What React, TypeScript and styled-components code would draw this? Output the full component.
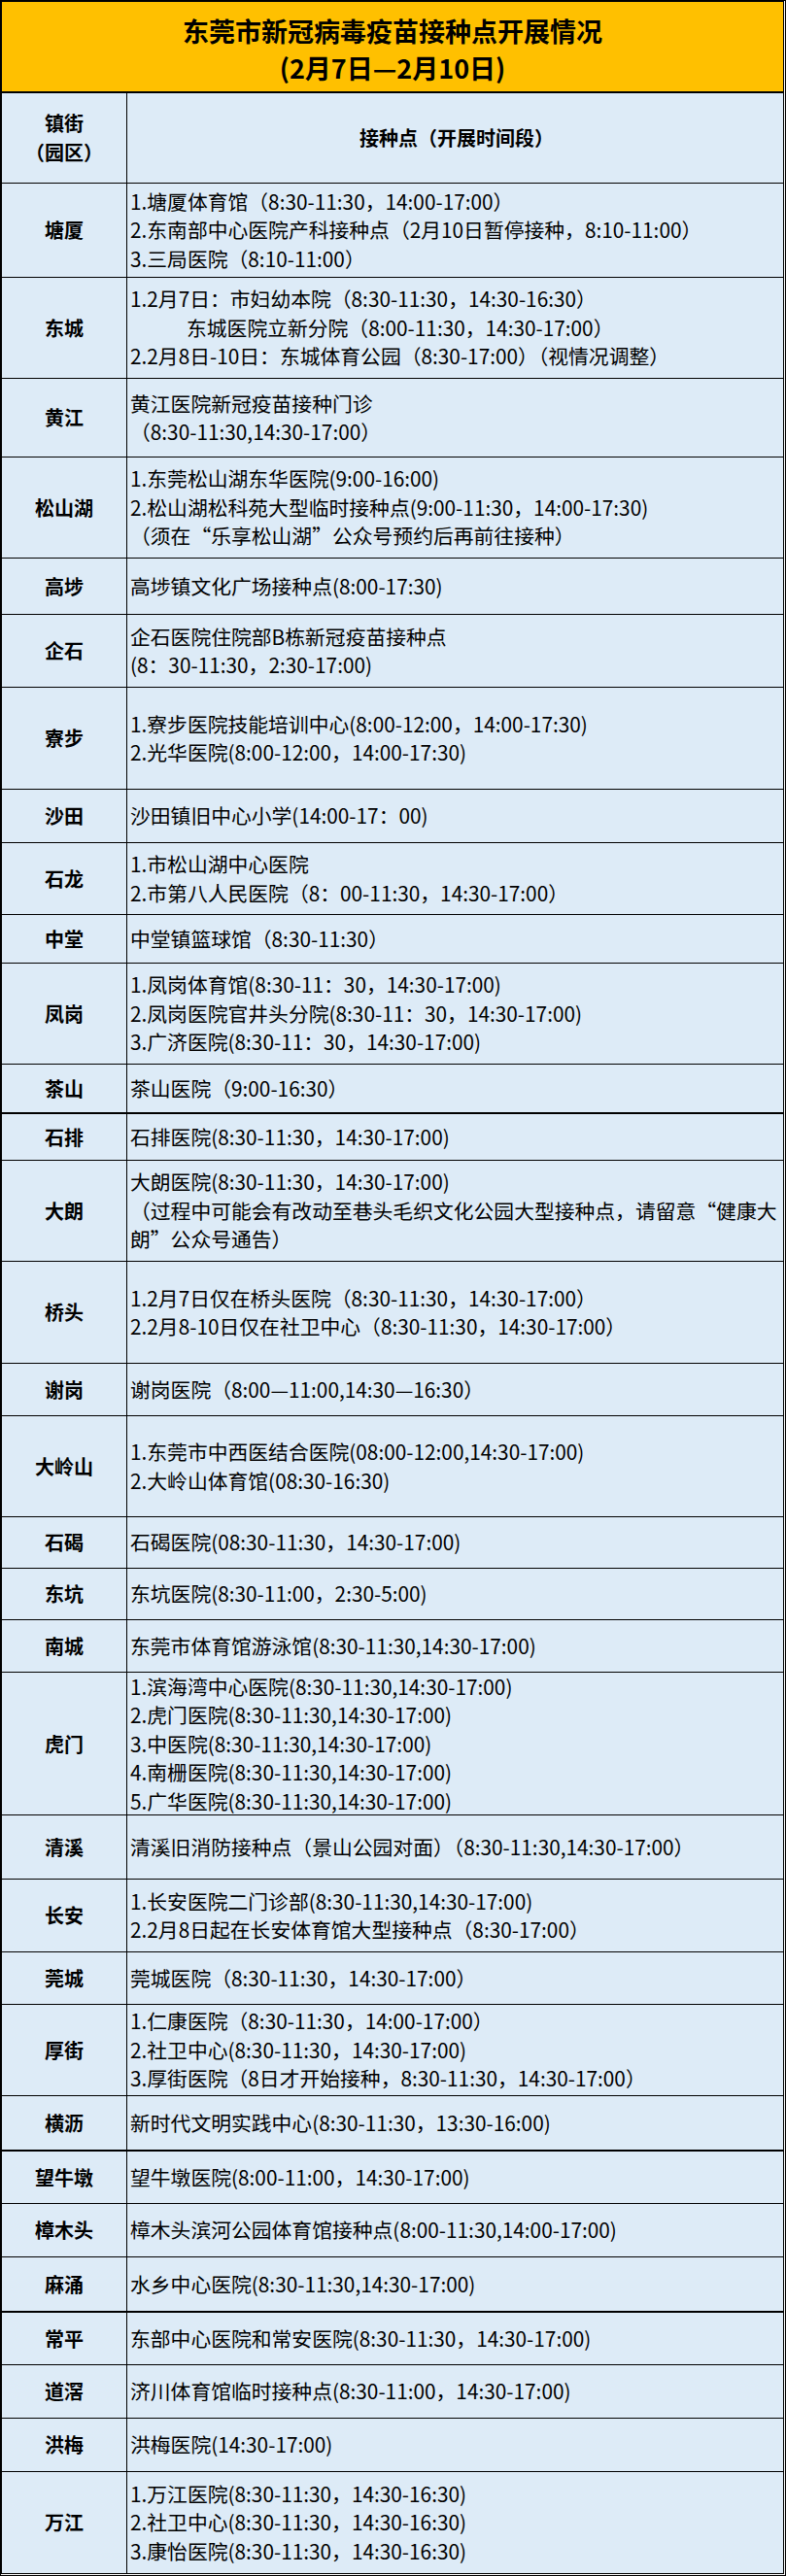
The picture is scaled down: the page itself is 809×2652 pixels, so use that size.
import { ReactElement } from "react"
import styled, { createGlobalStyle } from "styled-components"

const GlobalStyle = createGlobalStyle`
  html,
  body {
    margin: 0;
    padding: 0;
    background: #fff;
  }
  body {
    font-family: "Noto Sans CJK SC", "Noto Sans", sans-serif;
    color: #000;
  }
`

const Page = styled.div`
  width: 809px;
  box-sizing: border-box;
  border: 1px solid #000;
  padding: 0 1px 1px 0;
  background: #fff;
`

const Table = styled.div`
  border: 1px solid #000;
  background: #ddebf7;
`

const TitleBar = styled.div`
  height: 94px;
  box-sizing: border-box;
  padding-top: 6px;
  background: #ffc000;
  border-bottom: 2px solid #000;
  display: flex;
  flex-direction: column;
  align-items: center;
  justify-content: center;
  font-size: 27px;
  font-weight: 700;
  line-height: 38px;
`

const Row = styled.div<{ $h: number; $thick?: boolean; $head?: boolean }>`
  display: grid;
  grid-template-columns: 129px 1fr;
  height: ${(p) => p.$h}px;
  box-sizing: border-box;
  border-top: ${(p) => (p.$head ? "none" : `${p.$thick ? 2 : 1}px solid #000`)};
`

const Label = styled.div`
  border-right: 1px solid #000;
  display: flex;
  flex-direction: column;
  align-items: center;
  justify-content: center;
  font-size: 20px;
  font-weight: 700;
  line-height: 30px;
  text-align: center;
`

const Content = styled.div<{ $center?: boolean }>`
  display: flex;
  flex-direction: column;
  justify-content: center;
  align-items: ${(p) => (p.$center ? "center" : "flex-start")};
  padding-left: 3px;
  font-size: ${(p) => (p.$center ? "20px" : "20.8px")};
  font-weight: ${(p) => (p.$center ? 700 : 400)};
  line-height: 29.4px;
  white-space: nowrap;
`

const Text = styled.div<{ $indent?: number }>`
  padding-left: ${(p) => p.$indent ?? 0}px;
`

type Line = string | { text: string; indent: number }

type Site = {
  name: string
  h: number
  thick?: boolean
  lines: Line[]
}

const sites: Site[] = [
  {
    name: "塘厦",
    h: 97,
    lines: [
      "1.塘厦体育馆（8:30-11:30，14:00-17:00）",
      "2.东南部中心医院产科接种点（2月10日暂停接种，8:10-11:00）",
      "3.三局医院（8:10-11:00）",
    ],
  },
  {
    name: "东城",
    h: 104,
    lines: [
      "1.2月7日：市妇幼本院（8:30-11:30，14:30-16:30）",
      { text: "东城医院立新分院（8:00-11:30，14:30-17:00）", indent: 58 },
      "2.2月8日-10日：东城体育公园（8:30-17:00）（视情况调整）",
    ],
  },
  {
    name: "黄江",
    h: 81,
    lines: ["黄江医院新冠疫苗接种门诊", "（8:30-11:30,14:30-17:00）"],
  },
  {
    name: "松山湖",
    h: 104,
    lines: [
      "1.东莞松山湖东华医院(9:00-16:00)",
      "2.松山湖松科苑大型临时接种点(9:00-11:30，14:00-17:30)",
      "（须在“乐享松山湖”公众号预约后再前往接种）",
    ],
  },
  { name: "高埗", h: 58, lines: ["高埗镇文化广场接种点(8:00-17:30)"] },
  {
    name: "企石",
    h: 75,
    lines: ["企石医院住院部B栋新冠疫苗接种点", "(8：30-11:30，2:30-17:00)"],
  },
  {
    name: "寮步",
    h: 105,
    lines: [
      "1.寮步医院技能培训中心(8:00-12:00，14:00-17:30)",
      "2.光华医院(8:00-12:00，14:00-17:30)",
    ],
  },
  { name: "沙田", h: 55, lines: ["沙田镇旧中心小学(14:00-17：00)"] },
  {
    name: "石龙",
    h: 74,
    lines: ["1.市松山湖中心医院", "2.市第八人民医院（8：00-11:30，14:30-17:00）"],
  },
  { name: "中堂", h: 50, lines: ["中堂镇篮球馆（8:30-11:30）"] },
  {
    name: "凤岗",
    h: 104,
    lines: [
      "1.凤岗体育馆(8:30-11：30，14:30-17:00)",
      "2.凤岗医院官井头分院(8:30-11：30，14:30-17:00)",
      "3.广济医院(8:30-11：30，14:30-17:00)",
    ],
  },
  { name: "茶山", h: 50, lines: ["茶山医院（9:00-16:30）"] },
  { name: "石排", h: 49, thick: true, lines: ["石排医院(8:30-11:30，14:30-17:00)"] },
  {
    name: "大朗",
    h: 104,
    lines: [
      "大朗医院(8:30-11:30，14:30-17:00)",
      "（过程中可能会有改动至巷头毛织文化公园大型接种点，请留意“健康大",
      "朗”公众号通告）",
    ],
  },
  {
    name: "桥头",
    h: 105,
    lines: [
      "1.2月7日仅在桥头医院（8:30-11:30，14:30-17:00）",
      "2.2月8-10日仅在社卫中心（8:30-11:30，14:30-17:00）",
    ],
  },
  { name: "谢岗", h: 54, lines: ["谢岗医院（8:00—11:00,14:30—16:30）"] },
  {
    name: "大岭山",
    h: 104,
    lines: ["1.东莞市中西医结合医院(08:00-12:00,14:30-17:00)", "2.大岭山体育馆(08:30-16:30)"],
  },
  { name: "石碣", h: 53, lines: ["石碣医院(08:30-11:30，14:30-17:00)"] },
  { name: "东坑", h: 53, lines: ["东坑医院(8:30-11:00，2:30-5:00)"] },
  { name: "南城", h: 54, lines: ["东莞市体育馆游泳馆(8:30-11:30,14:30-17:00)"] },
  {
    name: "虎门",
    h: 147,
    lines: [
      "1.滨海湾中心医院(8:30-11:30,14:30-17:00)",
      "2.虎门医院(8:30-11:30,14:30-17:00)",
      "3.中医院(8:30-11:30,14:30-17:00)",
      "4.南栅医院(8:30-11:30,14:30-17:00)",
      "5.广华医院(8:30-11:30,14:30-17:00)",
    ],
  },
  { name: "清溪", h: 66, lines: ["清溪旧消防接种点（景山公园对面）（8:30-11:30,14:30-17:00）"] },
  {
    name: "长安",
    h: 75,
    lines: ["1.长安医院二门诊部(8:30-11:30,14:30-17:00)", "2.2月8日起在长安体育馆大型接种点（8:30-17:00）"],
  },
  { name: "莞城", h: 54, lines: ["莞城医院（8:30-11:30，14:30-17:00）"] },
  {
    name: "厚街",
    h: 94,
    lines: [
      "1.仁康医院（8:30-11:30，14:00-17:00）",
      "2.社卫中心(8:30-11:30，14:30-17:00)",
      "3.厚街医院（8日才开始接种，8:30-11:30，14:30-17:00）",
    ],
  },
  { name: "横沥", h: 56, lines: ["新时代文明实践中心(8:30-11:30，13:30-16:00)"] },
  { name: "望牛墩", h: 55, thick: true, lines: ["望牛墩医院(8:00-11:00，14:30-17:00)"] },
  { name: "樟木头", h: 55, lines: ["樟木头滨河公园体育馆接种点(8:00-11:30,14:00-17:00)"] },
  { name: "麻涌", h: 56, lines: ["水乡中心医院(8:30-11:30,14:30-17:00)"] },
  { name: "常平", h: 55, thick: true, lines: ["东部中心医院和常安医院(8:30-11:30，14:30-17:00)"] },
  { name: "道滘", h: 55, lines: ["济川体育馆临时接种点(8:30-11:00，14:30-17:00)"] },
  { name: "洪梅", h: 55, lines: ["洪梅医院(14:30-17:00)"] },
  {
    name: "万江",
    h: 105,
    lines: [
      "1.万江医院(8:30-11:30，14:30-16:30)",
      "2.社卫中心(8:30-11:30，14:30-16:30)",
      "3.康怡医院(8:30-11:30，14:30-16:30)",
    ],
  },
]

function App(): ReactElement {
  return (
    <Page>
      <GlobalStyle />
      <Table>
        <TitleBar>
          <div>东莞市新冠病毒疫苗接种点开展情况</div>
          <div>(2月7日—2月10日)</div>
        </TitleBar>
        <Row $h={92} $head>
          <Label>
            <div>镇街</div>
            <div>（园区）</div>
          </Label>
          <Content $center>接种点（开展时间段）</Content>
        </Row>
        {sites.map((site) => (
          <Row key={site.name} $h={site.h} $thick={site.thick}>
            <Label>{site.name}</Label>
            <Content>
              {site.lines.map((line, i) =>
                typeof line === "string" ? (
                  <Text key={i}>{line}</Text>
                ) : (
                  <Text key={i} $indent={line.indent}>
                    {line.text}
                  </Text>
                ),
              )}
            </Content>
          </Row>
        ))}
      </Table>
    </Page>
  )
}

export default App
